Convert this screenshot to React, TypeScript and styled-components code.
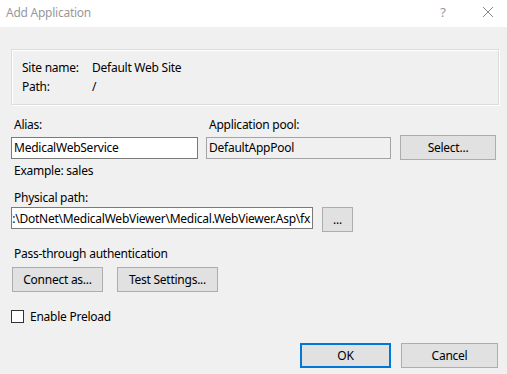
import React from "react";
import styled, { createGlobalStyle } from "styled-components";

const Global = createGlobalStyle`
  html, body { margin: 0; padding: 0; background: #f0f0f0; }
  body { font-family: "Noto Sans", "Open Sans", sans-serif; font-size: 12px; letter-spacing: -0.25px; color: #000; }
  * { box-sizing: border-box; }
`;

const Window = styled.div`
  width: 507px;
  height: 374px;
  background: #f0f0f0;
  display: flex;
  flex-direction: column;
  overflow: hidden;
`;

const TitleBar = styled.div`
  height: 27px;
  background: #fff;
  display: flex;
  align-items: center;
  padding-left: 6px;
  color: #999;
  font-size: 12px;
`;

const TitleText = styled.div`
  flex: 1;
  margin-top: -3px;
`;

const TitleButton = styled.div<{ $w: number }>`
  width: ${(p) => p.$w}px;
  height: 27px;
  display: flex;
  align-items: center;
  justify-content: center;
  color: #999;
  font-size: 13px;
  margin-top: -3px;
`;

const Content = styled.div`
  padding: 22px 0 0 11px;
  display: flex;
  flex-direction: column;
`;

const GroupBox = styled.div`
  width: 488px;
  height: 56px;
  border: 1px solid #dcdcdc;
  box-shadow: inset 1px 1px 0 #fff, 1px 1px 0 #fff;
  padding: 8px 0 0 10px;
  display: grid;
  grid-template-columns: 70px 1fr;
  grid-auto-rows: 19px;
  align-items: center;
`;

const Label = styled.div<{ $mt?: number; $ml?: number }>`
  height: 16px;
  line-height: 16px;
  margin-top: ${(p) => p.$mt ?? 0}px;
  margin-left: ${(p) => p.$ml ?? 0}px;
  white-space: nowrap;
`;

const Grid = styled.div<{ $mt?: number }>`
  display: grid;
  grid-template-columns: 187px 185px 97px;
  column-gap: 8px;
  margin-top: ${(p) => p.$mt ?? 0}px;
`;

const Row = styled.div<{ $mt?: number; $gap?: number; $align?: string }>`
  display: flex;
  align-items: ${(p) => p.$align ?? "center"};
  gap: ${(p) => p.$gap ?? 8}px;
  margin-top: ${(p) => p.$mt ?? 0}px;
`;

const TextBox = styled.div<{ $w: number; $ro?: boolean; $end?: boolean }>`
  width: ${(p) => p.$w}px;
  height: 22px;
  border: 1px solid ${(p) => (p.$ro ? "#a3a3a3" : "#7a7a7a")};
  background: ${(p) => (p.$ro ? "#f0f0f0" : "#fff")};
  padding: 0 2px;
  display: flex;
  align-items: center;
  justify-content: ${(p) => (p.$end ? "flex-end" : "flex-start")};
  overflow: hidden;
  white-space: nowrap;
`;

const Button = styled.div<{ $w: number; $default?: boolean; $ml?: number }>`
  width: ${(p) => p.$w}px;
  height: 25px;
  margin-left: ${(p) => p.$ml ?? 0}px;
  background: #e1e1e1;
  border: ${(p) => (p.$default ? "2px solid #0078d7" : "1px solid #adadad")};
  display: flex;
  align-items: center;
  justify-content: center;
  white-space: nowrap;
  padding-bottom: 1px;
`;

const CheckRow = styled.div`
  display: flex;
  align-items: center;
  gap: 6px;
  margin-top: 16px;
  height: 16px;
`;

const CheckBox = styled.div`
  width: 13px;
  height: 13px;
  border: 1px solid #333;
  background: #fff;
`;

const Footer = styled.div`
  display: flex;
  justify-content: flex-end;
  gap: 10px;
  padding-right: 9px;
  margin-top: 19px;
`;

export default function App() {
  return (
    <>
      <Global />
      <Window>
        <TitleBar>
          <TitleText>Add Application</TitleText>
          <TitleButton $w={52}>?</TitleButton>
          <TitleButton $w={38}>
            <svg width="12" height="12" viewBox="0 0 12 12">
              <path d="M1 1 L11 11 M11 1 L1 11" stroke="#888" strokeWidth="1" fill="none" />
            </svg>
          </TitleButton>
        </TitleBar>
        <Content>
          <GroupBox>
            <span>Site name:</span>
            <span>Default Web Site</span>
            <span>Path:</span>
            <span>/</span>
          </GroupBox>

          <Grid $mt={12}>
            <Label $ml={3}>Alias:</Label>
            <Label $ml={3}>Application pool:</Label>
            <span />
          </Grid>
          <Grid $mt={2}>
            <Row>
              <TextBox $w={187}>MedicalWebService</TextBox>
            </Row>
            <Row>
              <TextBox $w={185} $ro>DefaultAppPool</TextBox>
            </Row>
            <Row>
              <Button $w={97} $ml={1}>Select...</Button>
            </Row>
          </Grid>
          <Label $mt={3} $ml={3}>Example: sales</Label>

          <Label $mt={11} $ml={3}>Physical path:</Label>
          <Row $mt={1} $gap={9} $align="flex-start">
            <TextBox $w={302} $end>C:\DotNet\MedicalWebViewer\Medical.WebViewer.Asp\fx</TextBox>
            <Button $w={31}>...</Button>
          </Row>

          <Label $mt={14} $ml={3}>Pass-through authentication</Label>
          <Row $mt={5} $gap={14}>
            <Button $w={91} $ml={1}>Connect as...</Button>
            <Button $w={101}>Test Settings...</Button>
          </Row>

          <CheckRow>
            <CheckBox />
            <span>Enable Preload</span>
          </CheckRow>

          <Footer>
            <Button $w={91} $default>OK</Button>
            <Button $w={97}>Cancel</Button>
          </Footer>
        </Content>
      </Window>
    </>
  );
}
